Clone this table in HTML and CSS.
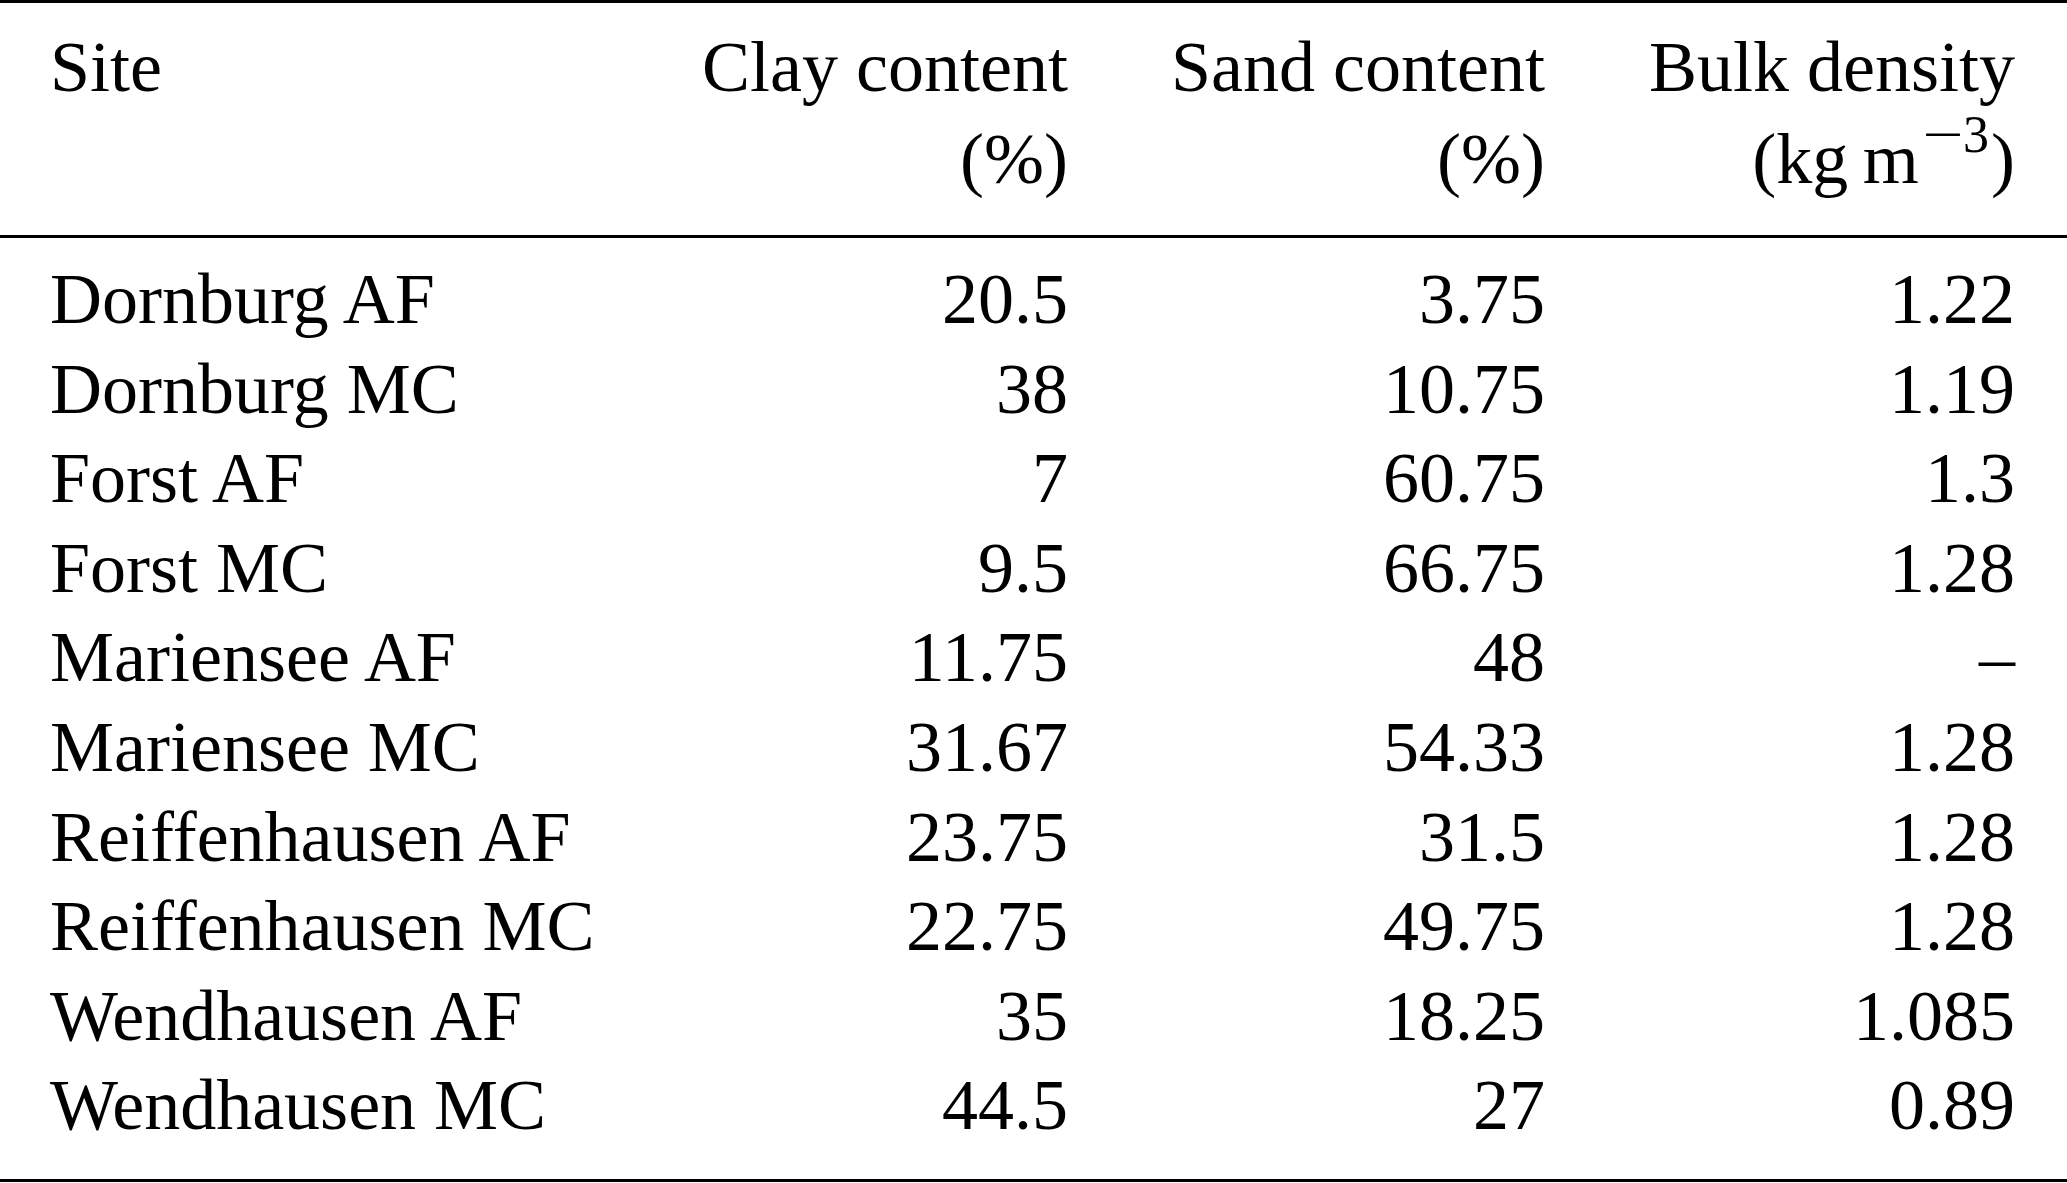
FILE: index.html
```html
<!DOCTYPE html>
<html lang="en">
  <head>
    <meta charset="UTF-8" />
    <meta name="viewport" content="width=device-width, initial-scale=1.0" />
    <title>Soil properties</title>
    <link rel="stylesheet" href="styles.css">
  </head>
  <body>
    <table class="soil-table">
      <colgroup>
        <col class="col-site" />
        <col class="col-clay" />
        <col class="col-sand" />
        <col class="col-bulk" />
      </colgroup>
      <thead>
        <tr>
          <th class="site">Site</th>
          <th class="num">Clay content<br />(%)</th>
          <th class="num">Sand content<br />(%)</th>
          <th class="num last">Bulk density<br />(kg&thinsp;m<sup class="exp"><span class="minus">&minus;</span>3</sup>)</th>
        </tr>
      </thead>
      <tbody>
        <tr><td class="site">Dornburg AF</td><td class="num">20.5</td><td class="num">3.75</td><td class="num last">1.22</td></tr>
        <tr><td class="site">Dornburg MC</td><td class="num">38</td><td class="num">10.75</td><td class="num last">1.19</td></tr>
        <tr><td class="site">Forst AF</td><td class="num">7</td><td class="num">60.75</td><td class="num last">1.3</td></tr>
        <tr><td class="site">Forst MC</td><td class="num">9.5</td><td class="num">66.75</td><td class="num last">1.28</td></tr>
        <tr><td class="site">Mariensee AF</td><td class="num">11.75</td><td class="num">48</td><td class="num last">&ndash;</td></tr>
        <tr><td class="site">Mariensee MC</td><td class="num">31.67</td><td class="num">54.33</td><td class="num last">1.28</td></tr>
        <tr><td class="site">Reiffenhausen AF</td><td class="num">23.75</td><td class="num">31.5</td><td class="num last">1.28</td></tr>
        <tr><td class="site">Reiffenhausen MC</td><td class="num">22.75</td><td class="num">49.75</td><td class="num last">1.28</td></tr>
        <tr><td class="site">Wendhausen AF</td><td class="num">35</td><td class="num">18.25</td><td class="num last">1.085</td></tr>
        <tr><td class="site">Wendhausen MC</td><td class="num">44.5</td><td class="num">27</td><td class="num last">0.89</td></tr>
      </tbody>
    </table>
  </body>
</html>
```

FILE: styles.css
```css
body {
  margin: 0;
  background: #fff;
  color: #000;
  font-family: "Liberation Serif", "Times New Roman", serif;
}
.soil-table {
  width: 2067px;
  border-collapse: collapse;
  table-layout: fixed;
  font-size: 72px;
  border-top: 3px solid #000;
  border-bottom: 3px solid #000;
}
.col-site {
  width: 600px;
}
.col-clay {
  width: 468px;
}
.col-sand {
  width: 477px;
}
.col-bulk {
  width: 522px;
}
th,
td {
  padding: 0;
  font-weight: normal;
  vertical-align: top;
  white-space: nowrap;
}
thead th {
  line-height: 92px;
  padding-top: 18px;
  padding-bottom: 30px;
  border-bottom: 3px solid #000;
}
tbody td {
  line-height: 89.6px;
}
tbody tr:first-child td {
  padding-top: 17px;
}
tbody tr:last-child td {
  padding-bottom: 28px;
}
.site {
  text-align: left;
  padding-left: 50px;
}
.num {
  text-align: right;
}
.num.last {
  padding-right: 52px;
}
.exp {
  font-size: 52px;
  line-height: 0;
  vertical-align: 31px;
  margin-left: 4px;
  margin-right: 2px;
}
.minus {
  display: inline-block;
  transform: scaleX(1.4);
  margin: 0 6px 0 5px;
}
```
